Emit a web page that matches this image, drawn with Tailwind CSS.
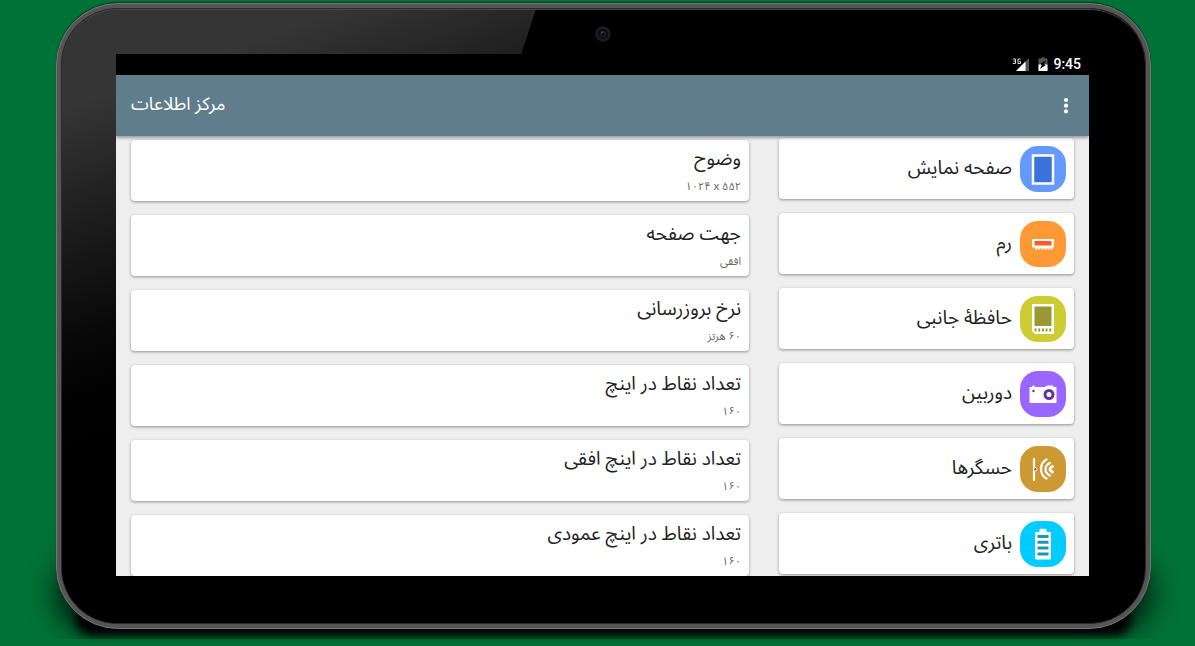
<!DOCTYPE html>
<html lang="fa">
<head>
<meta charset="utf-8">
<meta name="viewport" content="width=device-width, initial-scale=1">
<title>مرکز اطلاعات</title>
<script src="https://cdn.jsdelivr.net/npm/@tailwindcss/browser@4"></script>
</head>
<body class="flex h-screen flex-col overflow-hidden bg-[#007236] pt-[3px] pr-11 pb-[17px] pl-14 font-['Noto_Sans_Arabic','Noto_Sans','DejaVu_Sans',sans-serif] text-[#212121]">
<div class="relative flex min-h-0 flex-1 flex-col">
  <!-- ground shadow -->
  <div class="absolute -bottom-1 left-0 right-0 h-20 rounded-[40px] bg-black/80 blur-[14px] [clip-path:inset(-60px_-60px_-6px_-60px)]"></div>
  <div class="absolute -bottom-1.5 left-5 right-5 h-8 rounded-2xl bg-black blur-[4px]"></div>
  <!-- tablet body -->
  <div class="relative flex min-h-0 flex-1 flex-col rounded-[62px] border border-[#777] bg-[#555] p-1 shadow-[0_-1px_1px_rgba(0,0,0,0.45)]">
    <div class="relative flex min-h-0 flex-1 flex-col overflow-hidden rounded-[56px] border border-[#2a2a2a] bg-black pt-[45px] pr-14 pb-[47px] pl-[54px]">
      <!-- glass reflection -->
      <div class="absolute inset-0 bg-linear-160 from-[#353535] from-10% to-black to-50% [clip-path:polygon(0_0,474px_0,459px_46px,280px_100%,0_100%)]"></div>
      <div class="absolute inset-0 rounded-[56px] border-t border-[#484848]"></div>
      <!-- front camera -->
      <svg class="absolute left-1/2 top-[17px] -ml-[9px] size-4" viewBox="0 0 16 16" aria-hidden="true">
        <circle cx="8" cy="8" r="7.7" fill="#1d1d1d"/><circle cx="8" cy="8" r="5" fill="#0b0b0d"/><circle cx="8" cy="8" r="3.2" fill="#1c1c40"/><circle cx="8" cy="8.500" r="1.500" fill="#060618"/><circle cx="7" cy="6.500" r="1" fill="#44445f"/>
      </svg>

      <!-- screen -->
      <div class="relative flex min-h-0 flex-1 flex-col overflow-hidden bg-[#eee]">
        <div class="flex h-[21px] shrink-0 items-center justify-end bg-black pr-2 text-white">
          <svg class="h-4 w-[18px]" viewBox="0 0 18 16" aria-hidden="true">
            <path d="M17 1v13H4z" fill="#555"/><path d="M13.500 4.500V14H4z" fill="#fff"/>
            <path d="M.8 2h2.700v4.500H.8M1.500 4.200h2M8.500 2H6v4.500h2.500V4.500H7.300" fill="none" stroke="#ddd" stroke-width="1"/>
          </svg>
          <svg class="ml-[7px] h-4 w-3" viewBox="0 0 12 16" aria-hidden="true">
            <path d="M1.500 1.500H4V.5h4v1h2.500V14h-9z" fill="#555"/><path d="M1.500 7.500h9V14h-9z" fill="#fff"/><path d="M9.200 3L3.500 6.500l1.300 1.700L2.800 12 8.500 8.300 7 6.700z" fill="#000"/>
          </svg>
          <time class="ml-1 pb-0.5 font-[Roboto] text-sm leading-4 font-medium">9:45</time>
        </div>
        <header class="z-10 flex h-[61px] shrink-0 items-center justify-between bg-[#607d8b] pr-[11px] pl-[15px] text-white shadow-[0_2px_3px_rgba(0,0,0,0.35)]">
          <h1 dir="rtl" class="pb-1 text-lg leading-6">مرکز اطلاعات</h1>
          <button type="button" aria-label="گزینه‌های بیشتر" class="flex size-6 items-center justify-center">
            <svg class="h-5 w-2" viewBox="0 0 8 20" fill="#fff" aria-hidden="true"><circle cx="4" cy="4" r="2.100"/><circle cx="4" cy="9.700" r="2.100"/><circle cx="4" cy="15.400" r="2.100"/></svg>
          </button>
        </header>

        <div dir="rtl" class="flex min-h-0 flex-1 gap-[30px] overflow-hidden px-[15px]">
          <nav class="flex w-[295px] shrink-0 flex-col gap-3.5 pt-0.5 text-[19px] leading-7">
            <a href="#display" class="flex h-[61px] shrink-0 items-center gap-2 rounded-sm bg-white px-2 shadow-[0_1px_3px_rgba(0,0,0,0.4)]">
              <svg class="size-[46px]" viewBox="0 0 46 46" aria-hidden="true"><rect width="46" height="46" rx="18" fill="#6699ff"/><path d="M13 9.500h20v28H13z" fill="#3b71db" stroke="#fff" stroke-width="2.500"/></svg>
              <span class="pb-0.5">صفحه نمایش</span>
            </a>
            <a href="#ram" class="flex h-[61px] shrink-0 items-center gap-2 rounded-sm bg-white px-2 shadow-[0_1px_3px_rgba(0,0,0,0.4)]">
              <svg class="size-[46px]" viewBox="0 0 46 46" aria-hidden="true"><rect width="46" height="46" rx="18" fill="#ff9933"/><path d="M13 18h20q1 0 1 1v6.500q0 1-1 1h-.5v2h-2v-1.300h-1v1.300h-2v-1.300h-1.200v1.300h-2v-1.300h-1.200v1.300h-2v-1.300H20v1.300h-2v-1.300h-1v1.300h-2v-2h-2q-1 0-1-1V19q0-1 1-1z" fill="#fff"/><path d="M14.500 20h17v4.500h-17z" fill="#ff5a2c"/></svg>
              <span class="pb-0.5">رم</span>
            </a>
            <a href="#storage" class="flex h-[61px] shrink-0 items-center gap-2 rounded-sm bg-white px-2 shadow-[0_1px_3px_rgba(0,0,0,0.4)]">
              <svg class="size-[46px]" viewBox="0 0 46 46" aria-hidden="true"><rect width="46" height="46" rx="18" fill="#cccc33"/><path d="M13 8h20q1 0 1 1v28q0 1-1 1H15l-3-3V9q0-1 1-1z" fill="#fff"/><path d="M14.500 10.500h17v19.500h-17z" fill="#999933"/><path d="M15.500 32.500v3M19.200 32.500v3M22.900 32.500v3M26.600 32.500v3M30.300 32.500v3" stroke="#999933" stroke-width="2"/></svg>
              <span class="pb-0.5">حافظهٔ جانبی</span>
            </a>
            <a href="#camera" class="flex h-[61px] shrink-0 items-center gap-2 rounded-sm bg-white px-2 shadow-[0_1px_3px_rgba(0,0,0,0.4)]">
              <svg class="size-[46px]" viewBox="0 0 46 46" aria-hidden="true"><rect width="46" height="46" rx="18" fill="#9966ff"/><path d="M10.500 16H12q0-1.500 1.500-1.500T15 16h10l2-1.500h5.500l1.500 1.500h1.500q1 0 1 1v14q0 1-1 1h-25q-1 0-1-1V17q0-1 1-1z" fill="#fff"/><circle cx="29" cy="23.500" r="4" fill="#fff" stroke="#663399" stroke-width="3"/><circle cx="13.500" cy="20" r="1.200" fill="#663399"/></svg>
              <span class="pb-0.5">دوربین</span>
            </a>
            <a href="#sensors" class="flex h-[61px] shrink-0 items-center gap-2 rounded-sm bg-white px-2 shadow-[0_1px_3px_rgba(0,0,0,0.4)]">
              <svg class="size-[46px]" viewBox="0 0 46 46" aria-hidden="true"><rect width="46" height="46" rx="18" fill="#cc9933"/><g fill="none" stroke="#fff" stroke-linecap="round"><path d="M14 13v21" stroke-width="2.200"/><path d="M14.500 21q2.500.5 2.500 2.300t-2.500 2.200" fill="#c33" stroke-width="1"/><path d="M26.500 13.500q-5.500 3-5.500 9.500t5.500 9.500M30 17q-4.500 2-4.500 6.200t4.500 6.300" stroke-width="2.200"/><path d="M32.500 20.500q-2.500 1-2.500 2.700t2.500 2.800" stroke-width="2.800"/></g></svg>
              <span class="pb-0.5">حسگرها</span>
            </a>
            <a href="#battery" class="flex h-[61px] shrink-0 items-center gap-2 rounded-sm bg-white px-2 shadow-[0_1px_3px_rgba(0,0,0,0.4)]">
              <svg class="size-[46px]" viewBox="0 0 46 46" aria-hidden="true"><rect width="46" height="46" rx="18" fill="#00ccff"/><path d="M19.500 11V8.500q0-.8.800-.8h5.400q.8 0 .8.800V11h3.500q1 0 1 1v25.500q0 1-1 1H16q-1 0-1-1V12q0-1 1-1z" fill="#fff"/><path d="M17.500 15.500h11M17.500 21.200h11M17.500 27h11M17.500 33h11" stroke="#1e96b9" stroke-width="3"/></svg>
              <span class="pb-0.5">باتری</span>
            </a>
          </nav>

          <main class="flex min-w-0 flex-1 flex-col gap-3.5 pt-1">
            <section class="h-[61px] shrink-0 rounded-sm bg-white px-2 pt-[5px] shadow-[0_1px_3px_rgba(0,0,0,0.4)]">
              <h2 class="text-[19px] leading-7">وضوح</h2>
              <p class="pt-0.5 text-[11px] leading-6 text-[#666]"><bdo dir="ltr">۱۰۲۴ x ۵۵۲</bdo></p>
            </section>
            <section class="h-[61px] shrink-0 rounded-sm bg-white px-2 pt-[5px] shadow-[0_1px_3px_rgba(0,0,0,0.4)]">
              <h2 class="text-[19px] leading-7">جهت صفحه</h2>
              <p class="pt-0.5 text-[11px] leading-6 text-[#666]">افقی</p>
            </section>
            <section class="h-[61px] shrink-0 rounded-sm bg-white px-2 pt-[5px] shadow-[0_1px_3px_rgba(0,0,0,0.4)]">
              <h2 class="text-[19px] leading-7">نرخ بروزرسانی</h2>
              <p class="pt-0.5 text-[11px] leading-6 text-[#666]">۶۰ هرتز</p>
            </section>
            <section class="h-[61px] shrink-0 rounded-sm bg-white px-2 pt-[5px] shadow-[0_1px_3px_rgba(0,0,0,0.4)]">
              <h2 class="text-[19px] leading-7">تعداد نقاط در اینچ</h2>
              <p class="pt-0.5 text-[11px] leading-6 text-[#666]">۱۶۰</p>
            </section>
            <section class="h-[61px] shrink-0 rounded-sm bg-white px-2 pt-[5px] shadow-[0_1px_3px_rgba(0,0,0,0.4)]">
              <h2 class="text-[19px] leading-7">تعداد نقاط در اینچ افقی</h2>
              <p class="pt-0.5 text-[11px] leading-6 text-[#666]">۱۶۰</p>
            </section>
            <section class="h-[61px] shrink-0 rounded-sm bg-white px-2 pt-[5px] shadow-[0_1px_3px_rgba(0,0,0,0.4)]">
              <h2 class="text-[19px] leading-7">تعداد نقاط در اینچ عمودی</h2>
              <p class="pt-0.5 text-[11px] leading-6 text-[#666]">۱۶۰</p>
            </section>
          </main>
        </div>
      </div>
    </div>
  </div>
</div>
</body>
</html>
